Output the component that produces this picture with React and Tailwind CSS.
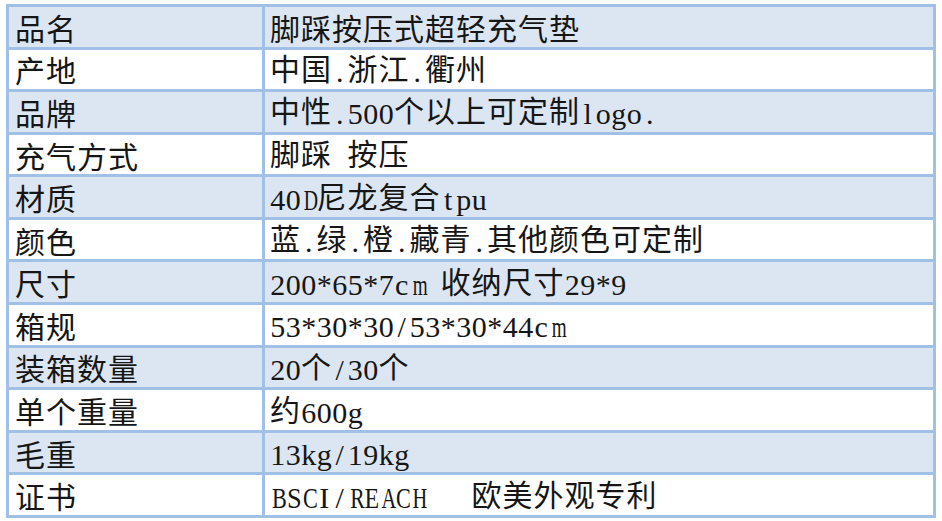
import React from 'react';

const rows = [
  ['品名', '脚踩按压式超轻充气垫'],
  ['产地', '中国.浙江.衢州'],
  ['品牌', '中性.500个以上可定制logo.'],
  ['充气方式', '脚踩 按压'],
  ['材质', '40D尼龙复合tpu'],
  ['颜色', '蓝.绿.橙.藏青.其他颜色可定制'],
  ['尺寸', '200*65*7cm 收纳尺寸29*9'],
  ['箱规', '53*30*30/53*30*44cm'],
  ['装箱数量', '20个/30个'],
  ['单个重量', '约600g'],
  ['毛重', '13kg/19kg'],
  ['证书', 'BSCI/REACH   欧美外观专利'],
];

// wide latin letters get squeezed into the half-width cell
const squeeze = {
  m: 'scale-x-[0.64]',
  D: 'scale-x-[0.66]',
  A: 'scale-x-[0.68]',
  H: 'scale-x-[0.68]',
  B: 'scale-x-[0.74]',
  C: 'scale-x-[0.74]',
  R: 'scale-x-[0.72]',
  E: 'scale-x-[0.8]',
  S: 'scale-x-[0.88]',
};

function HalfChar({ ch }) {
  return (
    <span
      className={`inline-block w-[15.5px] text-center align-[-2px] whitespace-pre font-['Liberation_Serif',serif] text-[30px] ${squeeze[ch] || ''}`}
    >
      {ch}
    </span>
  );
}

function MixedText({ text }) {
  const parts = text.match(/[\x00-\x7f]+|[^\x00-\x7f]+/g) || [];
  return (
    <span className="whitespace-nowrap">
      {parts.map((p, i) =>
        /^[\x00-\x7f]/.test(p) ? (
          p.split('').map((ch, j) => <HalfChar key={`${i}-${j}`} ch={ch} />)
        ) : (
          <span key={i} className="tracking-[1px]">
            {p}
          </span>
        )
      )}
    </span>
  );
}

export default function App() {
  return (
    <div className="w-[942px] h-[521px] bg-white pt-[4px] pl-[6px]">
      <div className="w-[930px] h-[514px] grid grid-cols-[253px_1fr] grid-rows-[repeat(12,1fr)] gap-[3px] p-[3px] bg-[#a0c0e6] font-['Noto_Sans_CJK_SC',sans-serif] text-[30px] text-[#161616] leading-none">
        {rows.map(([label, value], i) => {
          const bg = i % 2 === 0 ? 'bg-[#dce6f2]' : 'bg-white';
          return (
            <React.Fragment key={label}>
              <div className={`${bg} flex items-center pl-[6px] tracking-[1px]`}>{label}</div>
              <div className={`${bg} flex items-center pl-[5px]`}>
                <MixedText text={value} />
              </div>
            </React.Fragment>
          );
        })}
      </div>
    </div>
  );
}
